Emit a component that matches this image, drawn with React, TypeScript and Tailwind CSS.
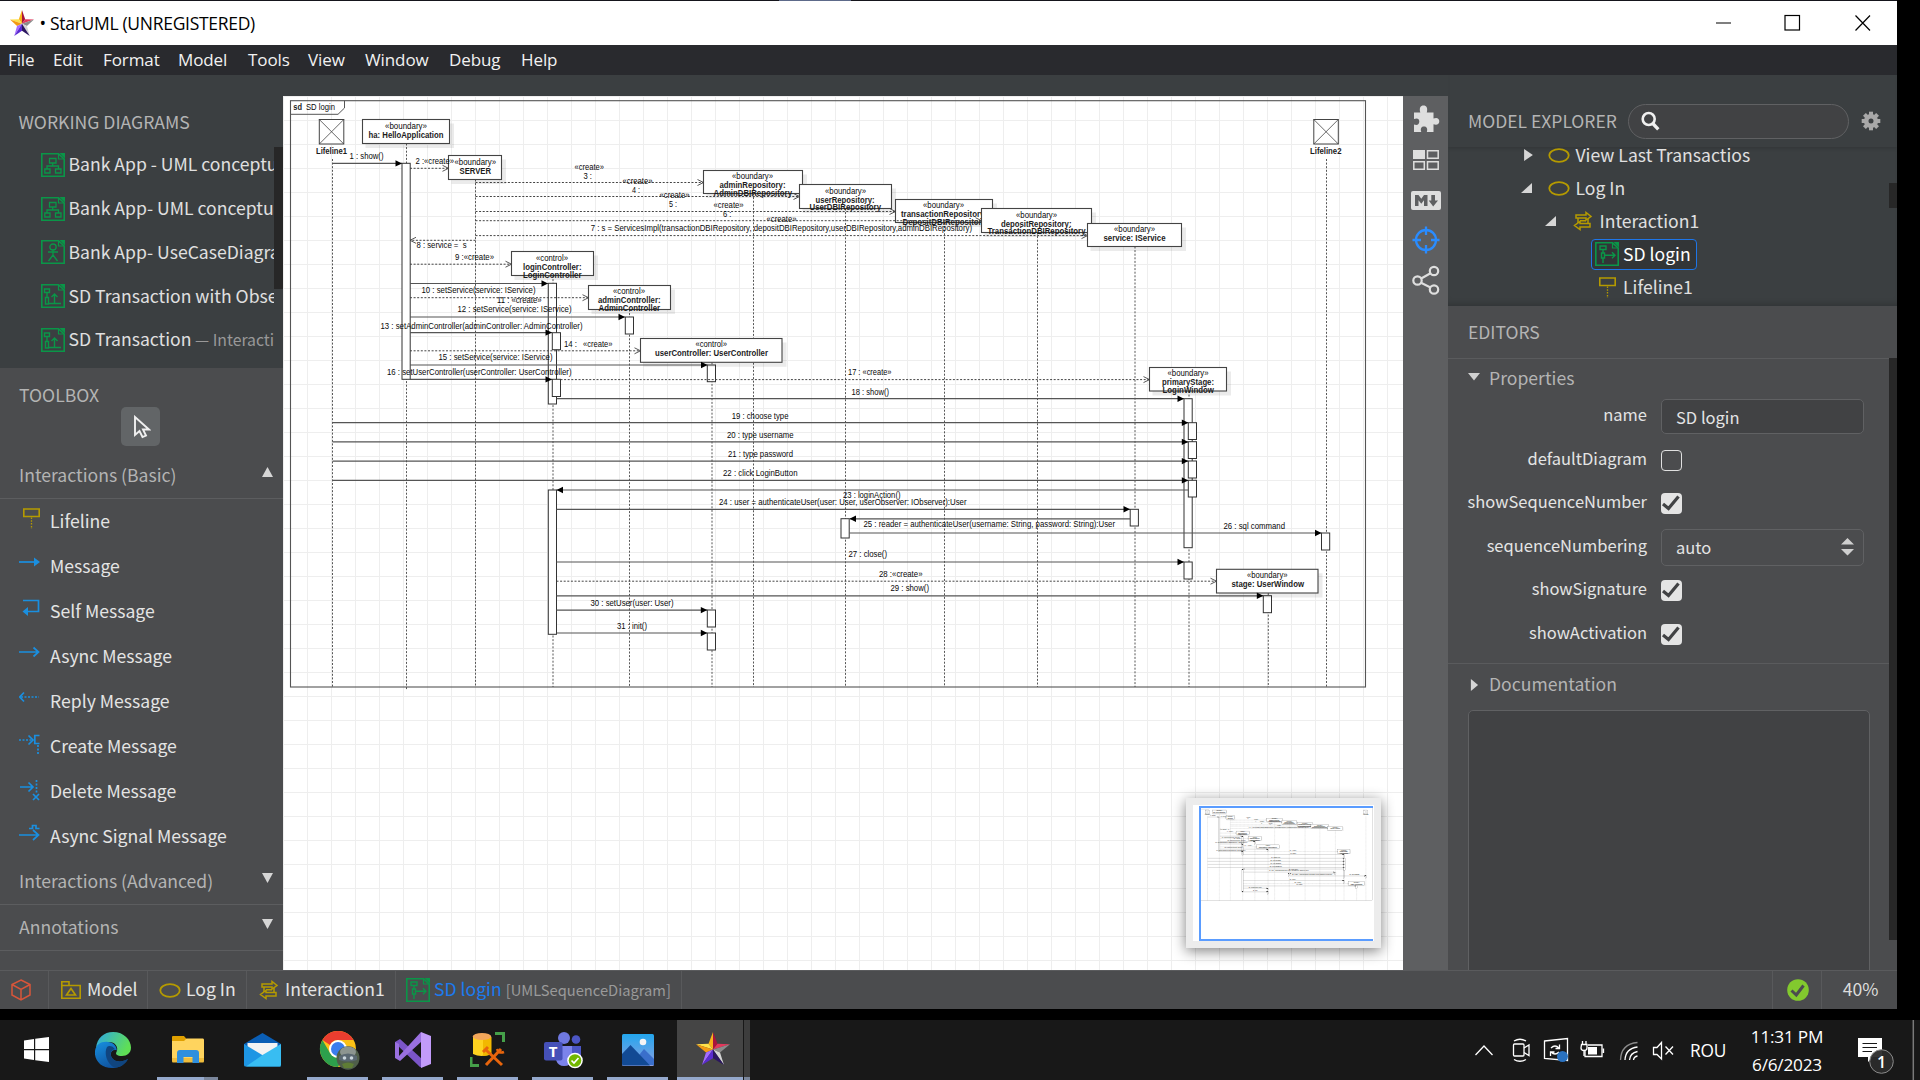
import React from "react";

const APP = "font-['Noto_Sans_CJK_SC','Noto_Sans',sans-serif]";
const SYS = "font-['Open_Sans','Noto_Sans',sans-serif]";

/* ---------- sequence diagram data ---------- */

type Box = {
  x1: number; y1: number; x2: number; y2: number; life: number; cx: number;
  lines: [string, number, number, number, boolean][];
};

const boxes: Box[] = [
  { x1: 362.5, y1: 119.5, x2: 449.5, y2: 143.5, life: 406.5, cx: 406, lines: [["«boundary»", 385, 427, 129, false], ["ha: HelloApplication", 368.5, 443.5, 138, true]] },
  { x1: 448.5, y1: 155.5, x2: 501.5, y2: 179.5, life: 475.5, cx: 475, lines: [["«boundary»", 454.5, 496, 165, false], ["SERVER", 459.5, 491, 174, true]] },
  { x1: 703.5, y1: 170.5, x2: 802.5, y2: 193.5, life: 753.5, cx: 753, lines: [["«boundary»", 732, 773, 179, false], ["adminRepository:", 719.5, 785.5, 188, true], ["AdminDBIRepository", 713.5, 792, 196.5, true]] },
  { x1: 799.5, y1: 184.5, x2: 891.5, y2: 208.5, life: 845.5, cx: 845, lines: [["«boundary»", 825, 866, 194, false], ["userRepository:", 815.5, 874.5, 203, true], ["UserDBIRepository", 809.5, 881, 210.5, true]] },
  { x1: 895.5, y1: 199.5, x2: 992.5, y2: 222.5, life: 944.5, cx: 944, lines: [["«boundary»", 923, 964, 208, false], ["transactionRepository:", 901, 987, 217, true], ["DepositDBIRepository", 902.5, 986, 225.5, true]] },
  { x1: 981.5, y1: 208.5, x2: 1091.5, y2: 232.5, life: 1037.5, cx: 1036, lines: [["«boundary»", 1016, 1057, 218, false], ["depositRepository:", 1001, 1071.5, 227, true], ["TransactionDBIRepository", 987.5, 1085.5, 234.8, true]] },
  { x1: 1087.5, y1: 223.5, x2: 1181.5, y2: 246.5, life: 1135, cx: 1134, lines: [["«boundary»", 1114, 1155, 232, false], ["service: IService", 1103.5, 1165.5, 241, true]] },
  { x1: 511.5, y1: 251.5, x2: 593.5, y2: 275.5, life: 553, cx: 552, lines: [["«control»", 536, 568, 261, false], ["loginController:", 523, 581.5, 270, true], ["LoginController", 523, 581.5, 278.3, true]] },
  { x1: 588.5, y1: 285.5, x2: 670.5, y2: 309.5, life: 629.5, cx: 629, lines: [["«control»", 613, 645, 294.5, false], ["adminController:", 598, 660.5, 303.5, true], ["AdminController", 598.5, 660, 311.3, true]] },
  { x1: 640.5, y1: 338.5, x2: 782, y2: 362.3, life: 712, cx: 711, lines: [["«control»", 695.5, 727, 347.3, false], ["userController: UserController", 655, 768, 356.3, true]] },
  { x1: 1149.5, y1: 367.5, x2: 1226.5, y2: 391, life: 1189, cx: 1188, lines: [["«boundary»", 1167.5, 1208.5, 376.7, false], ["primaryStage:", 1162, 1214, 385.5, true], ["LoginWindow", 1162.5, 1214, 393.7, true]] },
  { x1: 1216.5, y1: 569.3, x2: 1318, y2: 593, life: 1268.3, cx: 1267, lines: [["«boundary»", 1247, 1287.5, 578.7, false], ["stage: UserWindow", 1231.5, 1304, 587.7, true]] },
];

const bars: [number, number, number][] = [
  [402, 163.3, 379.3], [548.3, 283.3, 404], [625.3, 317, 334], [552.3, 332.7, 349.7], [707.3, 365, 381.7],
  [552.3, 379.3, 396.5], [1184, 398.7, 547.7], [1188.3, 422.7, 439.5], [1188.3, 441.7, 458.5], [1188.3, 461, 478],
  [1188.3, 480.3, 497], [548.3, 490, 634.3], [1130.2, 509.3, 526], [841, 518.7, 538], [1321.5, 533, 550],
  [1184, 562, 579], [1263.3, 595.7, 612.7], [707.3, 610, 627], [707.3, 633, 650],
];

/* from, to, y, dashed */
const arrows: [number, number, number, boolean][] = [
  [332.5, 402, 163.4, false], [410, 448.5, 168.3, true], [475.5, 703.5, 182.5, true], [475.5, 799.5, 196.5, true],
  [475.5, 895.5, 211.5, true], [475.5, 981.5, 220.7, true], [475.5, 1087.5, 235.6, true], [475.5, 410, 240.3, true],
  [410, 511.5, 264.2, true], [410, 548, 283.5, false], [410, 588.5, 297.7, true], [410, 625, 317, false],
  [410, 552, 332.6, false], [410, 640.5, 350.8, true], [410, 707.5, 365, false], [410, 552, 379.4, false],
  [560.5, 1149.5, 379.6, true], [556.5, 1184, 398.7, false], [332.5, 1188.3, 422.7, false], [332.5, 1188.3, 441.9, false],
  [332.5, 1188.3, 461.1, false], [332.5, 1188.3, 480.4, false], [1188.3, 556.5, 490, false], [556.5, 1130, 509.3, false],
  [1130, 849.5, 518.8, false], [849.5, 1321.5, 533, false], [556.5, 1184, 562, false], [556.5, 1216.5, 581.2, true],
  [556.5, 1263.3, 595.8, false], [556.5, 707.3, 610.1, false], [556.5, 707.3, 633, false],
];

/* text, left, right, baseline */
const labels: [string, number, number, number][] = [
  ["1 : show()", 349.5, 383.5, 159], ["2 :«create»", 415.5, 454, 164], ["«create»", 574.5, 604, 170], ["3 :", 583.5, 592, 179],
  ["«create»", 622.5, 652.5, 184], ["4 :", 632, 640, 193], ["«create»", 659.5, 689.5, 198], ["5 :", 669, 677, 207],
  ["«create»", 713.5, 743.7, 208], ["6 :", 723, 731.5, 217], ["«create»", 766.5, 796.5, 222],
  ["7 : s = ServicesImpl(transactionDBIRepository, depositDBIRepository,userDBIRepository,adminDBIRepository)", 590.7, 972, 231],
  ["8 : service =  s", 416.5, 466.5, 248], ["9 :«create»", 455, 494, 260], ["10 : setService(service: IService)", 421.5, 535.5, 293],
  ["11 : «create»", 497, 541.5, 303], ["12 : setService(service: IService)", 457.5, 571.5, 312],
  ["13 : setAdminController(adminController: AdminController)", 380.5, 582.5, 329], ["14 :", 564, 577, 347], ["«create»", 583, 612.5, 347],
  ["15 : setService(service: IService)", 438.5, 552.5, 360], ["16 : setUserController(userController: UserController)", 387, 571.5, 375],
  ["17 : «create»", 848, 891.5, 375], ["18 : show()", 851.5, 889, 395.5], ["19 : choose type", 731.7, 788.5, 419.5],
  ["20 : type username", 727, 793.7, 438.5], ["21 : type password", 728, 793, 457.5], ["22 : click LoginButton", 723, 797.5, 476.5],
  ["23 : loginAction()", 843, 900.5, 498.5], ["24 : user = authenticateUser(user: User, userObserver: IObserver):User", 719, 966.5, 505.7],
  ["25 : reader = authenticateUser(username: String, password: String):User", 863.5, 1115, 527.5], ["26 : sql command", 1223.5, 1285, 529.5],
  ["27 : close()", 848.5, 887, 557.5], ["28 :«create»", 879, 922.5, 577.5], ["29 : show()", 890.5, 929, 591.5],
  ["30 : setUser(user: User)", 590.5, 673.5, 606.5], ["31 : init()", 617, 647, 629.5],
];

function T({ t, a, b, y, bold }: { t: string; a: number; b: number; y: number; bold?: boolean }) {
  return (
    <text x={a} y={y - 0.5} textLength={b - a} lengthAdjust="spacingAndGlyphs" fontSize="8.2" fontWeight={bold ? 700 : 400} fill={bold ? "#1c1c1c" : "#080808"} xmlSpace="preserve">
      {t}
    </text>
  );
}

function Arrow({ a }: { a: [number, number, number, boolean] }) {
  const [x1, x2, y, dashed] = a;
  const d = x2 > x1 ? -1 : 1;
  return (
    <g>
      <line x1={x1} x2={x2} y1={y} y2={y} stroke={dashed ? "#444" : "#555"} strokeWidth={dashed ? 1 : 1.2} strokeDasharray={dashed ? "2 1.6" : undefined} />
      {dashed ? (
        <path d={`M${x2 + d * 6} ${y - 3}L${x2} ${y}L${x2 + d * 6} ${y + 3}`} fill="none" stroke="#444" strokeWidth="0.9" />
      ) : (
        <path d={`M${x2 + d * 6.5} ${y - 3.2}L${x2} ${y}L${x2 + d * 6.5} ${y + 3.2}Z`} fill="#000" />
      )}
    </g>
  );
}

function Actor({ x, name, a, b }: { x: number; name: string; a: number; b: number }) {
  return (
    <g>
      <rect x={x} y="119.5" width="24.5" height="24.5" fill="#fff" stroke="#444" />
      <path d={`M${x} 119.5l24.5 24.5M${x + 24.5} 119.5l-24.5 24.5`} stroke="#444" strokeWidth="0.8" />
      <T t={name} a={a} b={b} y={154} bold />
    </g>
  );
}

function Sequence() {
  return (
    <g id="sequence" fontFamily="'Liberation Sans', Arial, sans-serif">
      <rect x="290.5" y="100.7" width="1075" height="586.3" fill="none" stroke="#555" strokeWidth="1.1" />
      <path d="M290.5 114.3H338L344.5 108V100.7" fill="none" stroke="#555" />
      <T t="sd" a={293.3} b={302} y={110} bold />
      <T t="SD login" a={306} b={335} y={110} />
      <g stroke="#444" strokeWidth="0.9" strokeDasharray="2 1.6">
        <line x1="332.5" x2="332.5" y1="159" y2="687" />
        <line x1="1326.5" x2="1326.5" y1="159" y2="687" />
        {boxes.map((b) => (
          <line key={b.x1} x1={b.life} x2={b.life} y1={b.y2} y2={b.life === 406.5 ? 690 : 687} />
        ))}
      </g>
      {bars.map(([x, a, b], i) => (
        <rect key={i} x={x} y={a} width="8.2" height={b - a} fill="#fff" stroke="#333" />
      ))}
      <Actor x={319.3} name="Lifeline1" a={316} b={347} />
      <Actor x={1313.8} name="Lifeline2" a={1310} b={1341.5} />
      {boxes.map((b) => (
        <g key={b.x1}>
          <rect x={b.x1 + 3} y={b.y1 + 4} width={b.x2 - b.x1 + 1.5} height={b.y2 - b.y1 + 0.5} fill="#000" opacity="0.08" />
          <rect x={b.x1} y={b.y1} width={b.x2 - b.x1} height={b.y2 - b.y1} fill="#fff" stroke="#444" strokeWidth="1.1" />
          {b.lines.map(([t, l, r, y, bold]) => (
            <T key={t} t={t} a={l} b={r} y={y} bold={bold} />
          ))}
        </g>
      ))}
      {arrows.map((a, i) => (
        <Arrow key={i} a={a} />
      ))}
      {labels.map(([t, l, r, y], i) => (
        <T key={i} t={t} a={l} b={r} y={y} />
      ))}
    </g>
  );
}

/* ---------- small UML icons ---------- */

function DocIcon({ kind, w = 24 }: { kind: "class" | "use" | "seq" | "sd"; w?: number }) {
  return (
    <svg width={w} height={w} viewBox="0 0 24 24" className="shrink-0" fill="none" stroke="#0a9648" strokeWidth="1.6">
      <path d="M.8 .8H17.5L23.2 6V23.2H.8Z" />
      <path d="M18.5 0H24V5.5Z" fill="#0a9648" stroke="none" />
      <path d="M17.5 .8V6H23.2" strokeWidth="1.2" />
      {kind === "class" && <path d="M8.500 5.500H15V10H8.500ZM11.700 10V13M6 16V13H17.500V16M3.800 16H9V20H3.800ZM14.500 16H20V20H14.500Z" strokeWidth="1.300" />}
      {kind === "use" && (
        <g strokeWidth="1.3">
          <ellipse cx="12" cy="7" rx="3.200" ry="3" />
          <path d="M12 10V15M7 12H17M12 15L7.500 21M12 15L16.500 21" />
        </g>
      )}
      {kind === "seq" && <path d="M3.500 5H8.500V8.500H3.500ZM6 8.500V13.500M4.500 13.500H7.500V20H4.500ZM7.500 19.500H20M13.500 19.500V10M10.500 13L13.500 10L16.500 13" strokeWidth="1.400" />}
      {kind === "sd" && <path d="M5 4H11V7.500H5ZM8 7.500V11M6.500 11H9.500V16H6.500ZM8 16V21M9.500 13.300H20M17 10.300L20 13.300L17 16.300" strokeWidth="1.400" />}
    </svg>
  );
}

function Oval() {
  return (
    <svg width="22" height="15" viewBox="0 0 22 15" className="shrink-0"><ellipse cx="11" cy="7.500" rx="9.700" ry="6.300" fill="none" stroke="#b59a00" strokeWidth="1.800" /></svg>
  );
}

function Swap() {
  return (
    <svg width="20" height="20" viewBox="0 0 20 20" className="shrink-0" fill="none" stroke="#b59a00" strokeWidth="1.500">
      <path d="M3 4H13V1.500L18 5.500L13 9V7H3ZM17 12.500H7V10.500L1.500 14.500L7 18.500V16H17Z" />
      <path d="M5 7V12M15 8V12.500M7 9.800H13" />
    </svg>
  );
}

function Lifeline({ w = 17 }: { w?: number }) {
  return (
    <svg width={w} height="21" viewBox="0 0 17 21" className="shrink-0" fill="none" stroke="#b59a00" strokeWidth="1.600">
      <path d="M.8 1H16.200V8.500H.8Z" />
      <path d="M8.500 9.500V21" strokeDasharray="1.500 1.300" strokeWidth="1.300" />
    </svg>
  );
}

const toolPaths: Record<string, React.ReactNode> = {
  Message: <><path d="M0 8H16" /><path d="M15 3.500L21 8L15 12.500Z" fill="#1a8fe0" stroke="none" /></>,
  "Self Message": <><path d="M4 1.500H19.500V12.500H8" /><path d="M9 8L3.500 12.500L9 17Z" fill="#1a8fe0" stroke="none" /></>,
  "Async Message": <path d="M0 8H19.500M14.500 3.500L19.500 8L14.500 12.500" />,
  "Reply Message": <><path d="M5 3.500L.8 8L5 12.500" /><path d="M2 8H20" strokeDasharray="2 1.500" /></>,
  "Create Message": <><path d="M0 6H13" strokeDasharray="2 1.500" /><path d="M9.500 1.500L14 6L9.500 10.500M20.500 1.500H15.800V9.500H20.500" /><path d="M19 11V21" strokeDasharray="2 1.500" /></>,
  "Delete Message": <><path d="M1 8H14M9.500 3.500L14 8L9.500 12.500M14 15L20 21M20 15L14 21" /><path d="M17.500 1V14" strokeDasharray="2 1.500" /></>,
  "Async Signal Message": <path d="M0 11H19.500M14 6L19.500 11L14 16M10 4.500H13.500V1.500H17V4.500H20.500" />,
};

function Tri({ dir, w = 11 }: { dir: "up" | "down" | "right" | "corner"; w?: number }) {
  const p = { up: "0,10 5,0 10,10", down: "0,0 10,0 5,10", right: "1,0 9,5 1,10", corner: "10,0 10,10 0,10" }[dir];
  return (
    <svg width={w} height={dir === "right" ? 12 : 10} viewBox="0 0 10 10" preserveAspectRatio="none" className="shrink-0"><polygon points={p} fill="#d6d6d6" /></svg>
  );
}

/* ---------- left side ---------- */

const working: [string, string, "class" | "use" | "seq"][] = [
  ["Bank App - UML conceptual", "", "class"], ["Bank App- UML conceptual", "", "class"], ["Bank App- UseCaseDiagram", "", "use"],
  ["SD Transaction with Observer", "", "seq"], ["SD Transaction", "— Interaction", "seq"],
];

function Sidebar() {
  return (
    <aside className="flex w-[283px] shrink-0 flex-col overflow-hidden bg-[#4b4c4e]">
      <div className="flex h-[293px] shrink-0 bg-[#3b3f41]">
        <div className="w-[274px] overflow-hidden">
          <h2 className="mt-[25px] ml-[18.500px] h-[43px] text-[17.600px] leading-[43px] text-[#b4b4b4]">WORKING DIAGRAMS</h2>
          {working.map(([t, sub, k], i) => (
            <div key={i} className="flex h-[43.800px] items-center gap-[3.500px] pl-[41px] text-[17.600px] whitespace-nowrap text-[#e0e0e0]">
              <DocIcon kind={k} />
              <span className="pb-[1px]">{t}{sub && <span className="text-[15.800px] text-[#999]"> {sub}</span>}</span>
            </div>
          ))}
        </div>
        <div className="mt-[72px] h-[142px] w-[9px] bg-[#272727]" />
      </div>
      <h2 className="mt-[1px] h-[38px] shrink-0 pt-[13px] pl-[19px] text-[17.600px] leading-[25px] text-[#b4b4b4]">TOOLBOX</h2>
      <div className="mx-auto flex h-[39px] w-[39px] shrink-0 -translate-x-[1px] items-center justify-center rounded-[5px] bg-[#626567]">
        <svg width="18" height="24" viewBox="0 0 18 24" className="ml-[3px]"><path d="M2 2V20L6.500 16L9.500 22L13 20.500L10 14.500H16Z" fill="none" stroke="#f0f0f0" strokeWidth="1.900" /></svg>
      </div>
      <div className="mt-[6px] flex h-[47px] shrink-0 items-center justify-between border-b border-[#5c5d5f] pr-[10px] pl-[19px] text-[17.600px] text-[#b4b4b4]">
        <span>Interactions (Basic)</span><span className="pb-[6px]"><Tri dir="up" /></span>
      </div>
      <div className="flex h-[45px] shrink-0 items-center pl-[23px] text-[17.600px] text-[#e4e4e4]">
        <span className="w-[27px] pb-[6px]"><Lifeline /></span>Lifeline
      </div>
      {Object.keys(toolPaths).map((k) => (
        <div key={k} className="flex h-[45px] shrink-0 items-center pl-[19px] text-[17.600px] text-[#e4e4e4]">
          <svg width="22" height="22" viewBox="0 0 22 22" fill="none" stroke="#1a8fe0" strokeWidth="1.700" className="mr-[9px] -translate-y-[2px]">{toolPaths[k]}</svg>
          {k}
        </div>
      ))}
      {["Interactions (Advanced)", "Annotations"].map((t) => (
        <div key={t} className="flex h-[46px] shrink-0 items-center justify-between border-b border-[#5c5d5f] pr-[10px] pl-[19px] text-[17.600px] text-[#b4b4b4]">
          <span>{t}</span><span className="pb-[8px]"><Tri dir="down" /></span>
        </div>
      ))}
    </aside>
  );
}

/* ---------- canvas ---------- */

function Canvas() {
  return (
    <main className="mt-[21px] w-[1120px] shrink-0 bg-white">
      <svg width="1120" height="874" viewBox="283 96 1120 874" className="block">
        <defs>
          <pattern id="grid" x="307" y="120" width="24" height="24" patternUnits="userSpaceOnUse">
            <path d="M0 .5H24M.5 0V24" stroke="#eeeeee" />
          </pattern>
          <filter id="soft" x="-20%" y="-20%" width="140%" height="140%"><feGaussianBlur stdDeviation="7" /></filter>
          <clipPath id="mini"><rect x="1193" y="805" width="180" height="136" /></clipPath>
        </defs>
        <rect x="283" y="96" width="1120" height="874" fill="url(#grid)" />
        <Sequence />
        <rect x="1186" y="801" width="195" height="150" fill="#000" opacity="0.5" filter="url(#soft)" />
        <rect x="1186" y="798" width="195" height="150" fill="#ececec" />
        <rect x="1193" y="805" width="181" height="136" fill="#fff" />
        <g clipPath="url(#mini)">
          <use href="#sequence" transform="translate(1154.600 791) scale(.1593)" />
          <rect x="1200" y="807" width="190" height="133" fill="none" stroke="#5a9cff" strokeWidth="2" />
        </g>
      </svg>
    </main>
  );
}

/* ---------- right side ---------- */

function ToolStrip() {
  return (
    <div className="mt-[21px] flex w-[45px] shrink-0 flex-col items-center bg-[#5e5f61] pt-[8px]">
      <svg width="28" height="30" viewBox="0 0 28 30" fill="#dedede">
        <path d="M2 8.500H8.300C7 4 8.500 1.500 11.500 1.500S16 4 14.800 8.500H21.500V14.500C25 13 27.300 14.500 27.300 17.300S25 21.500 21.500 20.300V28H14.800C16 24.500 14.500 22.500 12 22.500S8 24.500 9.300 28H2V20.500C5.500 21.800 7.300 20 7.300 17.500S5.500 13.500 2 15Z" />
      </svg>
      <svg width="26" height="20" viewBox="0 0 26 20" className="mt-[16px]" fill="none" stroke="#dedede" strokeWidth="1.500">
        <path d="M0 0H12V9H0Z" fill="#dedede" stroke="none" />
        <path d="M14.500 .8H25.200V8.300H14.500ZM.8 11.700H11.300V19.200H.8ZM14.500 11.700H25.200V19.200H14.500Z" />
      </svg>
      <svg width="30" height="19" viewBox="0 0 30 19" className="mt-[21px]">
        <rect width="30" height="19" rx="2" fill="#dedede" />
        <path d="M4 15V4H7.500L10.300 7.800L13 4H16.500V15H13V9.300L10.300 12.700L7.500 9.300V15ZM20.300 4H24V9.500H27L22.200 15.500L17.700 9.500H20.300Z" fill="#5e5f61" />
      </svg>
      <svg width="28" height="28" viewBox="0 0 28 28" className="mt-[16px]" fill="none" stroke="#2a8cff" strokeWidth="2.300">
        <circle cx="14" cy="14" r="10" /><path d="M14 .5V9M14 19V27.500M.5 14H9M19 14H27.500" />
      </svg>
      <svg width="28" height="30" viewBox="0 0 28 30" className="mt-[11px]" fill="none" stroke="#dedede" strokeWidth="2.200">
        <circle cx="5.500" cy="15.500" r="4.200" /><circle cx="22" cy="6" r="4.200" /><circle cx="22" cy="24.500" r="4.200" />
        <path d="M9.200 13.500L18.500 8.200M9 17.800L18.500 22.500" />
      </svg>
    </div>
  );
}

const row = "flex h-[33px] items-center text-[17.600px] text-[#e0e0e0]";

function Check({ on }: { on?: boolean }) {
  return on ? (
    <svg width="21" height="21" viewBox="0 0 21 21"><rect width="21" height="21" rx="4" fill="#e4e4e4" /><path d="M2 11L7.500 15.500L17.500 3.500" fill="none" stroke="#414244" strokeWidth="3.200" /></svg>
  ) : (
    <span className="block h-[21px] w-[21px] rounded-[4px] border border-[#e0e0e0]" />
  );
}

function Field({ label, children }: { label: string; children: React.ReactNode }) {
  return (
    <div className="flex h-[43.500px] items-center">
      <span className="w-[199px] pb-[4px] text-right text-[16.500px] whitespace-nowrap text-[#e4e4e4]">{label}</span>
      <span className="ml-[14px]">{children}</span>
    </div>
  );
}

function RightPanel() {
  return (
    <aside className="flex w-[449px] shrink-0 flex-col overflow-hidden bg-[#4b4c4e]">
      <div className="h-[231px] shrink-0 bg-[#3b3f41] shadow-[inset_0_-6px_6px_-4px_rgba(0,0,0,.18)]">
        <div className="flex h-[72px] items-center pt-[20px] pl-[20px] shadow-[0_2px_3px_rgba(0,0,0,.12)]">
          <h2 className="w-[160px] text-[17.500px] whitespace-nowrap text-[#b4b4b4]">MODEL EXPLORER</h2>
          <div className="flex h-[35px] w-[221px] items-center rounded-full border border-[#606163] bg-[#414244] pl-[12px]">
            <svg width="19" height="20" viewBox="0 0 19 20" fill="none" stroke="#f0f0f0"><circle cx="7.700" cy="8" r="6" strokeWidth="2.600" /><path d="M11.800 12.500L17.300 18.300" strokeWidth="3.300" /></svg>
          </div>
          <svg width="20" height="20" viewBox="-10 -10 20 20" className="ml-[11.500px]">
            <circle r="4.800" fill="none" stroke="#a8a8a8" strokeWidth="4.600" />
            {[0, 45, 90, 135, 180, 225, 270, 315].map((a) => (
              <rect key={a} x="-2" y="-9.300" width="4" height="4" fill="#a8a8a8" transform={`rotate(${a})`} />
            ))}
          </svg>
        </div>
        <div className="flex h-[159px] overflow-hidden">
          <div className="-mt-[8.500px] w-[441px]">
            <div className={`${row} pl-[75px]`}><Tri dir="right" /><span className="w-[14px]" /><Oval /><span className="ml-[5.500px]">View Last Transactios</span></div>
            <div className={`${row} pl-[73px]`}><Tri dir="corner" /><span className="w-[16px]" /><Oval /><span className="ml-[5.500px]">Log In</span></div>
            <div className={`${row} pl-[97px]`}><Tri dir="corner" /><span className="w-[17px]" /><Swap /><span className="ml-[6.500px]">Interaction1</span></div>
            <div className="flex h-[33px] items-center pl-[143px]">
              <div className="flex h-[31px] w-[106px] items-center rounded-[4px] border border-[#1e76e8] bg-[#323537] pl-[3px] text-[17.600px] whitespace-nowrap text-white"><DocIcon kind="sd" /><span className="ml-[4px]">SD login</span></div>
            </div>
            <div className={`${row} pl-[151px]`}><Lifeline /><span className="ml-[7px]">Lifeline1</span></div>
          </div>
          <div className="mt-[36px] h-[25px] w-[8px] bg-[#272727]" />
        </div>
      </div>
      <h2 className="h-[52px] shrink-0 pl-[20px] text-[17.500px] leading-[51px] text-[#b4b4b4]">EDITORS</h2>
      <div className="flex h-[612px] shrink-0 overflow-hidden">
        <div className="w-[441px] border-t border-[#5a5b5d]">
          <div className="flex h-[36px] items-center pl-[20px] text-[17.600px] text-[#b4b4b4]"><svg width="12" height="8" viewBox="0 0 12 8"><path d="M0 0H12L6 7.500Z" fill="#d0d0d0" /></svg><span className="ml-[9px] pt-[3px]">Properties</span></div>
          <Field label="name"><span className="flex h-[35px] w-[203px] items-center rounded-[5px] border border-[#606163] bg-[#414244] pt-[1px] pl-[14px] text-[16.500px] text-[#e4e4e4]">SD login</span></Field>
          <Field label="defaultDiagram"><Check /></Field>
          <Field label="showSequenceNumber"><Check on /></Field>
          <Field label="sequenceNumbering">
            <span className="flex h-[37px] w-[203px] items-center justify-between rounded-[5px] border border-[#606163] pr-[9px] pl-[14px] text-[16.500px] text-[#e4e4e4]">auto
              <svg width="13" height="18" viewBox="0 0 13 18" fill="#cfcfcf"><path d="M0 6.500L6.500 0L13 6.500ZM0 11H13L6.500 17.500Z" /></svg>
            </span>
          </Field>
          <Field label="showSignature"><Check on /></Field>
          <Field label="showActivation"><Check on /></Field>
          <div className="mt-[7px] flex h-[47px] items-center border-t border-[#5a5b5d] pb-[5px] pl-[22px] text-[17.600px] text-[#b4b4b4]"><Tri dir="right" w={9} /><span className="ml-[10px]">Documentation</span></div>
          <div className="ml-[20px] h-[300px] w-[402px] rounded-[5px] border border-[#606163] bg-[#414244]" />
        </div>
        <div className="h-[582px] w-[8px] bg-[#272727]" />
      </div>
    </aside>
  );
}

function StatusBar() {
  const cell = "flex items-center border-r border-[#58595b] text-[17.600px] text-[#e4e4e4]";
  return (
    <footer className={`${APP} flex h-[39px] shrink-0 border-t border-[#5a5b5d] bg-[#4b4c4e] whitespace-nowrap`}>
      <div className={`${cell} w-[49px] pl-[11px]`}>
        <svg width="20" height="22" viewBox="0 0 20 22" fill="none" stroke="#d8553a" strokeWidth="1.500"><path d="M10 1L19 5.500V16L10 21L1 16V5.500ZM1 5.500L10 10.500L19 5.500M10 10.500V21" /></svg>
      </div>
      <div className={`${cell} w-[99px] gap-[6px] pl-[12px]`}>
        <svg width="20" height="18" viewBox="0 0 20 18" fill="none" stroke="#b59a00" strokeWidth="1.600"><path d="M.8 4V.8H8V4M.8 4.500H19.200V17.200H.8ZM5.500 14L10 7.500L14.500 14Z" /></svg><span className="pb-[1px]">Model</span>
      </div>
      <div className={`${cell} w-[99px] gap-[5px] pl-[11px]`}><Oval /><span className="pb-[1px]">Log In</span></div>
      <div className={`${cell} w-[149px] gap-[6px] pl-[12px]`}><Swap /><span className="pb-[1px]">Interaction1</span></div>
      <div className={`${cell} w-[286px] pl-[10px]`}>
        <DocIcon kind="sd" /><span className="ml-[4px] pb-[1px] text-[#1b7bf0]">SD login</span><span className="ml-[4px] pt-[1px] text-[14.700px] text-[#9a9a9a]">[UMLSequenceDiagram]</span>
      </div>
      <div className={`${cell} flex-1`} />
      <div className={`${cell} w-[49px] justify-center pl-[1px]`}>
        <svg width="22" height="22" viewBox="0 0 22 22"><circle cx="11" cy="11" r="10.800" fill="#82c92e" /><path d="M4.500 11.500L9.300 16L16.500 6.500" fill="none" stroke="#4b4c4e" strokeWidth="3" /></svg>
      </div>
      <div className="flex w-[75px] items-center justify-center pb-[1px] pl-[2px] text-[17.600px] text-[#dcdcdc]">40%</div>
    </footer>
  );
}

/* ---------- star logo and taskbar ---------- */

function Star({ size, h }: { size: number; h?: number }) {
  return (
    <svg width={size} height={h ?? size} viewBox="0 0 34 34" preserveAspectRatio="none">
      <polygon points="17,0 17,18 12.500,12" fill="#f8b31b" /><polygon points="17,0 21.500,12 17,18" fill="#a8143c" />
      <polygon points="0,12.500 12.500,12 17,18" fill="#ffe14a" /><polygon points="0,12.500 17,18 10,21" fill="#f39a12" />
      <polygon points="34,12.500 21.500,12 17,18" fill="#e2385c" /><polygon points="34,12.500 17,18 24,21" fill="#8b8b8b" />
      <polygon points="28,34 24,21 17,18" fill="#d5d5d5" /><polygon points="28,34 17,18 17,27" fill="#2b1660" />
      <polygon points="6,34 17,18 10,21" fill="#a56bff" /><polygon points="6,34 17,18 17,27" fill="#5a2bd0" />
    </svg>
  );
}

const taskIcons: React.ReactNode[] = [
  <svg width="25" height="25" viewBox="0 0 25 25" fill="#fff" className="-translate-x-[1px]"><path d="M0 3.500L10 2V12H0ZM11.200 1.800L25 0V12H11.200ZM0 13.200H10V23L0 21.500ZM11.200 13.200H25V25L11.200 23.200Z" /></svg>,
  <svg width="36" height="36" viewBox="0 0 36 36">
    <defs>
      <linearGradient id="e1" x1="0" y1="0" x2="1" y2="0.400"><stop offset="0" stopColor="#2da7e8" /><stop offset="1" stopColor="#5fdf55" /></linearGradient>
      <linearGradient id="e2" x1="0" y1="0" x2="0.600" y2="1"><stop offset="0" stopColor="#1790e0" /><stop offset="1" stopColor="#0f4f9a" /></linearGradient>
    </defs>
    <path d="M1 16C2 6 9 0 18 0C29 0 36 8 36 15.500C36 21 32 24 27 24C22 24 20 22 21.500 20C24 15 20 10 14 10C7 10 2 14 1 16Z" fill="url(#e1)" />
    <path d="M0 19C1 12 7 9 13 10C18 10.500 22 14 21.700 18.500C18 17 15 20 16 24C18 30 26 31 33 27C29 34 23 36 17 36C6 36 -1 28 0 19Z" fill="url(#e2)" />
    <path d="M12 15C9 20 11 32 20 35.700C25 35.500 30 32.500 33 27C26 31 18 30 16 24C15 20 17 17.500 20 17.300C18 14 14 13 12 15Z" fill="#10457f" />
  </svg>,
  <svg width="32" height="28" viewBox="0 0 32 28"><path d="M0 1Q0 0 1 0H12L14.500 3V7H0Z" fill="#e0a000" /><path d="M0 5H12L14.500 2.500H31Q32 2.500 32 4V25H0Z" fill="#ffd45e" /><path d="M0 22H32V25Q32 26.500 31 26.500H1Q0 26.500 0 25Z" fill="#f0bd3c" /><path d="M5 27V17Q5 14 8 14H24Q27 14 27 17V27H20.500V21H11.500V27Z" fill="#2f8fdd" /></svg>,
  <svg width="37" height="34" viewBox="0 0 37 34"><path d="M0 11L18.500 0L37 11V22H0Z" fill="#0a5eb5" /><path d="M3.500 10H33.500V20L18.500 28L3.500 20Z" fill="#f3f3f3" /><path d="M0 11L37 33.500H1.500Q0 33.500 0 32Z" fill="#1e96e4" /><path d="M37 11V32Q37 33.500 35.500 33.500H2L18.500 22Z" fill="#38bdf2" /></svg>,
  <svg width="42" height="40" viewBox="0 0 42 40" className="translate-x-[2px]">
    <circle cx="19" cy="19" r="18" fill="#fbc116" /><path d="M3.400 10A18 18 0 0 1 34.600 10H19A9 9 0 0 0 11 15Z" fill="#ea3d2f" /><path d="M3.400 10A18 18 0 0 0 19 37L26 24A9 9 0 0 1 11 23Z" fill="#2da04c" />
    <circle cx="19" cy="19" r="9" fill="#fff" /><circle cx="19" cy="19" r="7" fill="#3b7ded" />
    <ellipse cx="29" cy="28" rx="11.500" ry="11.800" fill="#4f5e4a" /><ellipse cx="29" cy="22" rx="8" ry="5.500" fill="#8c9590" /><path d="M20 26Q29 21 38 26V30Q29 33 20 30Z" fill="#5a6872" /><circle cx="25.500" cy="28" r="1.800" fill="#c9d6dd" /><circle cx="32.500" cy="28" r="1.800" fill="#c9d6dd" /><path d="M23 34Q29 31 35 34L33 38H25Z" fill="#5f7d35" />
  </svg>,
  <svg width="36" height="36" viewBox="0 0 36 36"><path d="M0 10L5 7L27 27V35.500L25 35L0 11Z" fill="#7b55c8" /><path d="M0 26V10L4 12V24L26 0V10L5 29Z" fill="#9a70e0" /><path d="M26 0L36 4V32L26 36Z" fill="#c29bfa" /></svg>,
  <svg width="36" height="36" viewBox="0 0 36 36"><path d="M3 4V22Q11 26 21 22V4Z" fill="#ffd21f" /><path d="M13 5H21.500V22Q18 24 13 24Z" fill="#f2b800" /><ellipse cx="12" cy="4.500" rx="9.300" ry="3.500" fill="#f2a65a" /><path d="M25 1.500H33.500V10M1 25V33.500H9" fill="none" stroke="#45a049" strokeWidth="3" /><path d="M15 17L32 33M31 17L16 33M13 20L18 15" stroke="#e8650c" strokeWidth="3" fill="none" /><path d="M27 17Q29 22 34 20" stroke="#e8650c" strokeWidth="2.500" fill="none" /></svg>,
  <svg width="40" height="38" viewBox="0 0 40 38" className="translate-x-[1px]">
    <circle cx="20" cy="7" r="6" fill="#6f78e0" /><circle cx="32" cy="8.500" r="4.300" fill="#4c56c4" /><path d="M24 15H37V26Q35 31 29 31H24Z" fill="#4c56c4" /><path d="M12 15H28V29Q27 35 20 35Q14 35 12 29Z" fill="#7b83eb" />
    <rect y="11" width="18.500" height="18.500" rx="2" fill="#4550b8" /><text x="9.200" y="26" fontSize="15" fontWeight="700" fill="#fff" textAnchor="middle" fontFamily="Open Sans, sans-serif">T</text>
    <circle cx="31" cy="29.500" r="7.800" fill="#fff" /><circle cx="31" cy="29.500" r="6.300" fill="#72b800" /><path d="M27.500 29.500L30 32L34.500 27" fill="none" stroke="#fff" strokeWidth="1.700" />
  </svg>,
  <svg width="32" height="32" viewBox="0 0 32 32"><defs><linearGradient id="ph" x1="0" y1="0" x2="0" y2="1"><stop offset="0" stopColor="#22a6ee" /><stop offset="1" stopColor="#8d9fe0" /></linearGradient></defs><rect width="32" height="32" rx="1.500" fill="url(#ph)" /><path d="M13 26L22 15L32 25V31H13Z" fill="#3a6fcb" /><path d="M0 20L8.500 11L28 31.500H1.500Q0 31.500 0 30Z" fill="#124a94" /><circle cx="21" cy="8" r="3.300" fill="#f5f5f5" /></svg>,
];

function Taskbar() {
  return (
    <div className={`${SYS} flex h-[60px] bg-[#181818] text-white`}>
      {taskIcons.map((ic, i) => (
        <div key={i} className="flex w-[75px] flex-col items-center">
          <div className="flex h-[57px] items-center justify-center pt-[2px]">{ic}</div>
          {(i === 2 || i > 3) && <div className={`flex h-[3px] w-[61px] self-center ${i === 2 ? "bg-[#7a869b]" : "bg-[#95a9cc]"}`}>{i === 2 && <div className="h-full w-[47px] bg-[#95a9cc]" />}</div>}
        </div>
      ))}
      <div className="ml-[2px] flex h-[60px] w-[66px] flex-col bg-[#454545]">
        <div className="flex h-[57px] items-center justify-center pl-[5px]"><Star size={34} h={33} /></div>
        <div className="h-[3px] bg-[#95a9cc]" />
      </div>
      <div className="ml-[1px] h-[60px] w-[6px] border-b-[3px] border-[#7a869b] bg-[#3d3d3d]" />
      <div className="flex-1" />
      <svg width="210" height="60" viewBox="1470 1020 210 60" fill="none" stroke="#fff" strokeWidth="1.300">
        <path d="M1475.500 1055L1484 1046L1492.500 1055" />
        <rect x="1513.500" y="1044" width="10.500" height="12" rx="1" /><path d="M1524 1048L1529 1045V1055.500L1524 1052.500M1514 1041Q1520 1037.500 1526 1041M1514 1059.500Q1520 1063 1526 1059.500" />
        <path d="M1544.500 1041L1567.500 1038.500V1060.500L1544.500 1058.500Z" /><path d="M1551 1048Q1555 1044 1559 1048M1559.500 1044.500V1048.500H1555.500M1559 1052Q1555 1056 1551 1052M1550.500 1056V1052H1554.500" />
        <circle cx="1562.500" cy="1056.500" r="5.500" fill="#2a72c0" stroke="none" />
        <path d="M1588 1045H1602V1056.500H1585V1051M1603.500 1048.500V1053" /><rect x="1588" y="1047" width="9" height="7.500" fill="#fff" stroke="none" /><path d="M1581.500 1044.500H1587V1048Q1587 1050.500 1584 1050.500T1581 1048ZM1582.500 1041V1044M1586 1041V1044M1584 1050V1056" />
        <path d="M1620.500 1060Q1621 1044 1637.500 1042.500" stroke="#8a8a8a" /><path d="M1625 1060Q1625.500 1048.500 1637.500 1047M1629.500 1060Q1630 1053 1637.500 1051.500M1633.500 1060Q1634 1056.500 1637.500 1056" />
        <path d="M1653.500 1047.500H1657L1661.500 1042.500V1059L1657 1054.500H1653.500ZM1665.500 1046.500L1673 1054.500M1673 1046.500L1665.500 1054.500" />
      </svg>
      <div className="flex w-[58px] items-center justify-center pr-[2px] pt-[1px] text-[17.300px] tracking-[-0.200px]">ROU</div>
      <div className="flex w-[100px] flex-col items-center pr-[2px] pt-[3px] text-[17.200px] leading-[28px] tracking-[-0.200px]"><span>11:31 PM</span><span>6/6/2023</span></div>
      <svg width="82" height="60" viewBox="1838 1020 82 60">
        <path d="M1858 1038H1882V1057H1873L1868 1062V1057H1858Z" fill="#fff" /><path d="M1862.500 1043.500H1877M1862.500 1047.500H1877M1862.500 1051.500H1872" stroke="#181818" strokeWidth="1.200" />
        <circle cx="1881.500" cy="1061.500" r="11.800" fill="#2b2b2b" fillOpacity="0.950" stroke="#8a8a8a" /><text x="1881.500" y="1067.500" fontSize="16" fontWeight="600" fill="#fff" textAnchor="middle">1</text>
        <path d="M1913.300 1020V1080" stroke="#7a7a7a" strokeWidth="1.500" />
      </svg>
    </div>
  );
}

const menu: [string, number][] = [["File", 45], ["Edit", 50], ["Format", 75], ["Model", 70], ["Tools", 60], ["View", 57], ["Window", 84], ["Debug", 72], ["Help", 60]];

export default function App() {
  return (
    <div className="flex h-[1080px] w-[1920px] flex-col overflow-hidden bg-black">
      <div className="flex h-[1009px] w-[1897px] flex-col">
        <div className="flex h-[1px] shrink-0 bg-[#15151c]"><div className="ml-[779px] w-[72px] bg-[#5d6a8a]" /></div>
        <header className={`${SYS} flex h-[44px] shrink-0 items-center bg-white pl-[10px] text-black`}>
          <Star size={24} h={26} />
          <span className="ml-[5.500px] text-[17.500px] tracking-[-0.300px]">• StarUML (UNREGISTERED)</span>
          <span className="flex-1" />
          <svg width="160" height="18" viewBox="0 0 160 18" className="mr-[24.500px]" fill="none" stroke="#000" strokeWidth="1.200"><path d="M3 9H18M142.500 1.500L157 16.500M157 1.500L142.500 16.500" /><rect x="72" y="1.500" width="14.500" height="14.500" /></svg>
        </header>
        <nav className={`${SYS} flex h-[30px] shrink-0 items-center bg-[#292a2e] pl-[8px] text-[17px] text-[#f2f2f2]`}>
          {menu.map(([m, w]) => (
            <span key={m} className="pb-[1px] tracking-[-0.100px]" style={{ width: w }}>{m}</span>
          ))}
        </nav>
        <div className={`${APP} flex h-[895px] shrink-0 bg-[#3b3f41]`}>
          <Sidebar />
          <Canvas />
          <ToolStrip />
          <RightPanel />
        </div>
        <StatusBar />
      </div>
      <div className="h-[11px] shrink-0" />
      <Taskbar />
    </div>
  );
}
